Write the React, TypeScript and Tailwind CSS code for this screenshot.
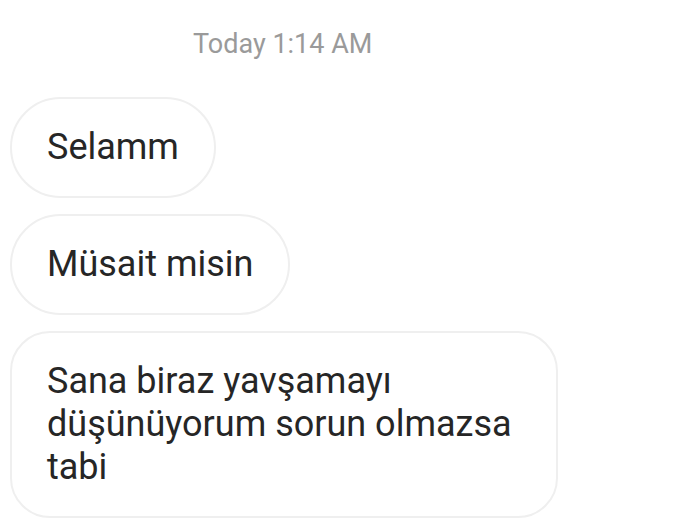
const messages = [
  "Selamm",
  "Müsait misin",
  "Sana biraz yavşamayı düşünüyorum sorun olmazsa tabi",
];

export default function App() {
  return (
    <div
      className="w-[690px] h-[525px] bg-white overflow-hidden"
      style={{ fontFamily: "Roboto, 'Liberation Sans', sans-serif" }}
    >
      <div className="pt-[28px] pl-[193px] text-[27px] leading-[32px] text-[#9a9a9a]">
        Today 1:14 AM
      </div>

      <div className="flex flex-col items-start gap-[16px] pl-[10px] mt-[37px]">
        {messages.map((text) => (
          <div
            key={text}
            className={`max-w-[548px] border-2 border-[#efefef] bg-white pl-[35px] pr-[35px] py-[27px] text-[36px] leading-[43px] text-[#262626] ${
              text.length > 20 ? "rounded-[40px]" : "rounded-full"
            }`}
          >
            {text}
          </div>
        ))}
      </div>
    </div>
  );
}
